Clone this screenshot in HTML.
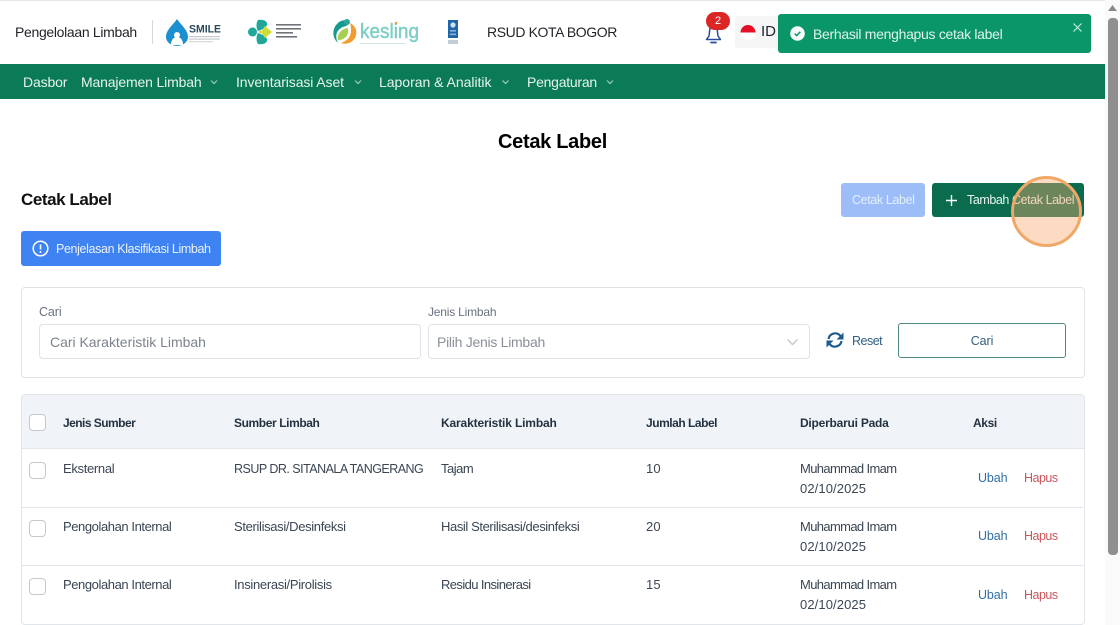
<!DOCTYPE html>
<html lang="id"><head><meta charset="utf-8"><title>Cetak Label</title>
<style>
*{box-sizing:border-box}
html,body{margin:0;padding:0;width:1120px;height:625px;overflow:hidden;background:#fff;font-family:"Liberation Sans",Arial,sans-serif}
.a{position:absolute}
.t{position:absolute;white-space:nowrap;line-height:20px;height:20px;font-size:13px;color:#3a4653;letter-spacing:-.1px}
.h{font-weight:700;color:#243240;font-size:12px}
.nav{color:#e6f4ef;font-size:14px;letter-spacing:-.15px;top:72px}
.u{color:#2f6ea5;font-size:12.5px}.d{color:#c9565c;font-size:12.5px;letter-spacing:-.5px}
.m{letter-spacing:-.64px}.dt{letter-spacing:.1px}.pi{letter-spacing:-.42px}
.cb{position:absolute;left:29px;width:17px;height:17px;background:#fff;border:1.5px solid #c5c9cf;border-radius:4px}
.ln{position:absolute;left:22px;width:1061px;height:1px;background:#e2e5e9}
</style></head><body>
<div class="a" style="left:0;top:0;width:1105px;height:1px;background:#e5e7eb"></div>
<div class="t" style="left:15px;top:22px;font-size:14px;color:#1f2328;letter-spacing:-.32px">Pengelolaan Limbah</div>
<div class="a" style="left:152px;top:20px;width:1px;height:24px;background:#d5d8dc"></div>

<svg class="a" style="left:164px;top:18px" width="62" height="28" viewBox="0 0 62 28"><path d="M13 1C9 7 2 12 2 19a10.500 8.500 0 0 0 22 0C24 12 17 7 13 1Z" fill="#1b8fd0"/><circle cx="13" cy="17" r="3" fill="#fff"/><path d="M7 27c0-6 3-8 6-8s6 2 6 8z" fill="#fff"/>
<text x="25" y="14.500" font-family="Liberation Sans" font-weight="700" font-size="11" fill="#2c4a5e" textLength="32" lengthAdjust="spacingAndGlyphs">SMILE</text>
<rect x="25" y="18" width="31" height="1.200" fill="#c3cbd1"/><rect x="25" y="20.500" width="31" height="1.200" fill="#c3cbd1"/><rect x="25" y="23" width="24" height="1.200" fill="#d3d9dd"/></svg>

<svg class="a" style="left:247px;top:18px" width="60" height="28" viewBox="0 0 60 28"><circle cx="5.500" cy="14" r="4.500" fill="#1fa79a"/><path d="M11 2c5-1 10 1 9 5-1 3-6 5-9 6-2-3-2-8 0-11z" fill="#1fa79a"/><path d="M11 26c5 1 10-1 9-5-1-3-6-5-9-6-2 3-2 8 0 11z" fill="#1fa79a"/><path d="M18 8l7 6-7 6-4-6z" fill="#cddc39"/><path d="M12 12l5 2-5 2z" fill="#f6d13b"/>
<rect x="29" y="6" width="25" height="1.600" fill="#6f757c"/><rect x="29" y="10" width="25" height="1.600" fill="#6f757c"/><rect x="29" y="14" width="17" height="1.600" fill="#6f757c"/><rect x="29" y="18" width="21" height="1.600" fill="#6f757c"/></svg>

<svg class="a" style="left:330px;top:17px" width="92" height="30" viewBox="0 0 92 30"><path d="M8 6A13 13 0 0 0 8 26C4 18 7 11 16 9c3-1 3-4 1-6-4 0-7 1-9 3Z" fill="#169a8d"/><circle cx="17" cy="5" r="3" fill="#2aa79b"/><path d="M20 6c6 3 8 9 5 15-3 5-9 7-14 5 6-2 10-6 10-12 0-3 0-5-1-8Z" fill="#f39c2e"/><path d="M8 23c-1-6 3-11 10-12 1 7-3 12-10 12Z" fill="#a5cf4c"/>
<text x="30" y="21" font-family="Liberation Sans" font-size="20" fill="#7fcfc6" stroke="#7fcfc6" stroke-width=".5" textLength="59" lengthAdjust="spacingAndGlyphs">kesling</text><circle cx="66" cy="6" r="1.300" fill="#f39c2e"/><rect x="30" y="26" width="46" height="1" fill="#cfe9e6"/></svg>

<svg class="a" style="left:448px;top:20px" width="10" height="25" viewBox="0 0 10 25"><rect width="10" height="18" fill="#1f65a8"/><circle cx="5" cy="5" r="2.600" fill="#cfe0ef"/><rect x="2" y="10" width="6" height="1.600" fill="#8fb4d6"/><rect x="2" y="13.500" width="6" height="1.600" fill="#8fb4d6"/><rect y="20" width="10" height="4" fill="#c3cdd6"/></svg>
<div class="t" style="left:487px;top:22px;font-size:14px;color:#1f2328;letter-spacing:-.39px">RSUD KOTA BOGOR</div>

<svg class="a" style="left:703px;top:25px" width="21" height="20" viewBox="0 0 21 20"><path d="M7 3 6 11l-2.500 3.500h14L15 11l-1-8" fill="none" stroke="#2a4c9c" stroke-width="1.500" stroke-linejoin="round"/><path d="M8 17.500h5" stroke="#2a4c9c" stroke-width="1.800" stroke-linecap="round"/></svg>
<div class="a" style="left:706px;top:12px;width:24px;height:18px;border-radius:9px;background:#dc2626;color:#fff;font-size:11px;line-height:18px;text-align:center">2</div>
<div class="a" style="left:735px;top:16px;width:50px;height:32px;background:#f5f5f5;border-radius:3px"></div>
<svg class="a" style="left:740px;top:25px" width="16" height="15" viewBox="0 0 16 15"><path d="M.5 7.500a7.500 7.500 0 0 1 15 0z" fill="#e30f24"/><path d="M.5 7.500a7.500 7.500 0 0 0 15 0z" fill="#fff"/></svg>
<div class="t" style="left:761px;top:22px;font-size:15px;color:#1f2328">ID</div>

<div class="a" style="left:778px;top:14px;width:313px;height:38.500px;background:#0b9669;border-radius:3px"></div>
<svg class="a" style="left:790px;top:26px" width="15" height="15" viewBox="0 0 15 15"><circle cx="7.500" cy="7.500" r="7.300" fill="#f4fbf8"/><path d="M4.800 7.700l1.900 1.900 3.600-3.800" fill="none" stroke="#0b9669" stroke-width="1.500"/></svg>
<div class="t" style="left:813px;top:24px;font-size:14px;color:#dff3ec;letter-spacing:-.3px">Berhasil menghapus cetak label</div>
<svg class="a" style="left:1072px;top:22px" width="11" height="11" viewBox="0 0 11 11"><path d="M1.500 1.500l8 8M9.500 1.500l-8 8" stroke="#cdeee2" stroke-width="1.100"/></svg>

<div class="a" style="left:0;top:64px;width:1105px;height:35px;background:#0b7a56"></div>
<div class="t nav" style="left:23px">Dasbor</div>
<div class="t nav" style="left:81px">Manajemen Limbah</div>
<div class="t nav" style="left:236px;letter-spacing:-.1px">Inventarisasi Aset</div>
<div class="t nav" style="left:379px;letter-spacing:-.02px">Laporan &amp; Analitik</div>
<div class="t nav" style="left:527px;letter-spacing:-.25px">Pengaturan</div>
<svg class="a" style="left:0;top:64px" width="700" height="35" viewBox="0 0 700 35"><g fill="none" stroke="#9fcdbc" stroke-width="1.200"><path d="M211 16.500l3 3 3-3M355 16.500l3 3 3-3M502.500 16.500l3 3 3-3M607 16.500l3 3 3-3"/></g></svg>

<div class="t" style="left:0;width:1105px;text-align:center;top:130px;height:24px;line-height:24px;font-size:20px;font-weight:700;color:#000;letter-spacing:-.3px">Cetak Label</div>
<div class="t" style="left:21px;top:189px;height:22px;line-height:22px;font-size:17px;font-weight:700;color:#111;letter-spacing:-.44px">Cetak Label</div>

<div class="a" style="left:841px;top:183px;width:84px;height:34px;background:#9dbdf9;border-radius:3px"></div>
<div class="t" style="left:852px;top:190px;font-size:12.500px;color:#e4edfd;letter-spacing:-.38px">Cetak Label</div>
<div class="a" style="left:932px;top:183px;width:152px;height:34px;background:#0a6b4e;border-radius:3px"></div>
<svg class="a" style="left:945px;top:194px" width="13" height="13" viewBox="0 0 13 13"><path d="M6.500 1v11M1 6.500h11" stroke="#fff" stroke-width="1.400"/></svg>
<div class="t" style="left:967px;top:190px;font-size:12.500px;color:#eaf5f1;letter-spacing:-.42px">Tambah Cetak Label</div>

<div class="a" style="left:21px;top:231px;width:200px;height:35px;background:#3f83f3;border-radius:3px"></div>
<svg class="a" style="left:32px;top:240px" width="17" height="17" viewBox="0 0 17 17"><circle cx="8.500" cy="8.500" r="7.300" fill="none" stroke="#fff" stroke-width="1.500"/><path d="M8.500 4.500v5" stroke="#fff" stroke-width="1.600"/><circle cx="8.500" cy="12" r="1" fill="#fff"/></svg>
<div class="t" style="left:56px;top:238.500px;font-size:12.500px;color:#eaf1fe;letter-spacing:-.37px">Penjelasan Klasifikasi Limbah</div>

<div class="a" style="left:21px;top:287px;width:1064px;height:91px;border:1px solid #e0e3e7;border-radius:4px;background:#fff"></div>
<div class="t" style="left:39px;top:302px;font-size:12.500px;color:#6b7280">Cari</div>
<div class="a" style="left:39px;top:324px;width:382px;height:35px;border:1px solid #dfe2e6;border-radius:4px"></div>
<div class="t" style="left:50px;top:332px;font-size:14px;color:#7d848d;letter-spacing:-.02px">Cari Karakteristik Limbah</div>
<div class="t" style="left:428px;top:302px;font-size:12px;color:#6b7280;letter-spacing:-.2px">Jenis Limbah</div>
<div class="a" style="left:428px;top:324px;width:382px;height:35px;border:1px solid #dfe2e6;border-radius:4px"></div>
<div class="t" style="left:437px;top:332px;font-size:14px;color:#8a9098;letter-spacing:-.27px">Pilih Jenis Limbah</div>
<svg class="a" style="left:786px;top:338px" width="13" height="9" viewBox="0 0 13 9"><path d="M1.500 1.500l5 5 5-5" fill="none" stroke="#c3c7cc" stroke-width="1.400"/></svg>
<svg class="a" style="left:826px;top:331px" width="18" height="18" viewBox="0 0 18 18"><g fill="none" stroke="#1d5a8e" stroke-width="2.200"><path d="M2.500 8A6.700 6.700 0 0 1 14 4.500L16 7"/><path d="M15.500 10A6.700 6.700 0 0 1 4 13.500L2 11"/></g><path d="M17.500 1.500v7h-7zM.5 16.500v-7h7z" fill="#1d5a8e"/></svg>
<div class="t" style="left:852px;top:330.500px;font-size:12.500px;color:#2f5f86;letter-spacing:-.5px">Reset</div>
<div class="a" style="left:898px;top:323px;width:168px;height:35px;border:1.300px solid #4f8a80;border-radius:3px"></div>
<div class="t" style="left:898px;width:168px;text-align:center;top:330.500px;font-size:12.500px;color:#2f5f86">Cari</div>

<div class="a" style="left:21px;top:394px;width:1064px;height:231px;border:1px solid #e2e5e9;border-radius:4px;background:#fff"></div>
<div class="a" style="left:22px;top:395px;width:1062px;height:54px;background:#f0f4f9;border-bottom:1px solid #e2e6eb;border-radius:3px 3px 0 0"></div>
<div class="ln" style="top:507px"></div><div class="ln" style="top:565px"></div>
<div class="cb" style="top:414px"></div><div class="cb" style="top:462px"></div><div class="cb" style="top:520px"></div><div class="cb" style="top:578px"></div>

<div class="t h" style="left:63px;top:412.500px;letter-spacing:-.54px">Jenis Sumber</div>
<div class="t h" style="left:234px;top:412.500px;letter-spacing:-.4px">Sumber Limbah</div>
<div class="t h" style="left:441px;top:412.500px;letter-spacing:-.15px">Karakteristik Limbah</div>
<div class="t h" style="left:646px;top:412.500px;letter-spacing:-.47px">Jumlah Label</div>
<div class="t h" style="left:800px;top:412.500px;letter-spacing:-.23px">Diperbarui Pada</div>
<div class="t h" style="left:973px;top:412.500px;letter-spacing:-.37px">Aksi</div>

<div class="t" style="left:63px;top:459px;letter-spacing:-.32px">Eksternal</div>
<div class="t" style="left:234px;top:459px;font-size:12.500px;letter-spacing:-.52px">RSUP DR. SITANALA TANGERANG</div>
<div class="t" style="left:441px;top:459px;letter-spacing:-.5px">Tajam</div>
<div class="t" style="left:646px;top:459px;letter-spacing:.2px">10</div>
<div class="t m" style="left:800px;top:459px">Muhammad Imam</div>
<div class="t dt" style="left:800px;top:478.500px">02/10/2025</div>
<div class="t u" style="left:978px;top:468px">Ubah</div><div class="t d" style="left:1024px;top:468px">Hapus</div>

<div class="t pi" style="left:63px;top:517px">Pengolahan Internal</div>
<div class="t" style="left:234px;top:517px;letter-spacing:-.34px">Sterilisasi/Desinfeksi</div>
<div class="t" style="left:441px;top:517px;letter-spacing:-.4px">Hasil Sterilisasi/desinfeksi</div>
<div class="t" style="left:646px;top:517px;letter-spacing:.2px">20</div>
<div class="t m" style="left:800px;top:517px">Muhammad Imam</div>
<div class="t dt" style="left:800px;top:536.500px">02/10/2025</div>
<div class="t u" style="left:978px;top:526px">Ubah</div><div class="t d" style="left:1024px;top:526px">Hapus</div>

<div class="t pi" style="left:63px;top:575px">Pengolahan Internal</div>
<div class="t" style="left:234px;top:575px;letter-spacing:-.31px">Insinerasi/Pirolisis</div>
<div class="t" style="left:441px;top:575px;letter-spacing:-.6px">Residu Insinerasi</div>
<div class="t" style="left:646px;top:575px;letter-spacing:.2px">15</div>
<div class="t m" style="left:800px;top:575px">Muhammad Imam</div>
<div class="t dt" style="left:800px;top:594.500px">02/10/2025</div>
<div class="t u" style="left:978px;top:584.500px">Ubah</div><div class="t d" style="left:1024px;top:584.500px">Hapus</div>

<div class="a" style="left:1011px;top:176px;width:71px;height:71px;border-radius:50%;background:rgba(248,170,110,.42);border:3px solid #f0a868"></div>

<div class="a" style="left:1105px;top:0;width:15px;height:625px;background:#fafafa"></div>
<svg class="a" style="left:1107px;top:4px" width="11" height="8" viewBox="0 0 11 8"><path d="M5.500 1l4.500 6H1z" fill="#8a8a8a"/></svg>
<div class="a" style="left:1108px;top:18px;width:10px;height:537px;background:#8f8f8f;border-radius:4px"></div>
</body></html>
